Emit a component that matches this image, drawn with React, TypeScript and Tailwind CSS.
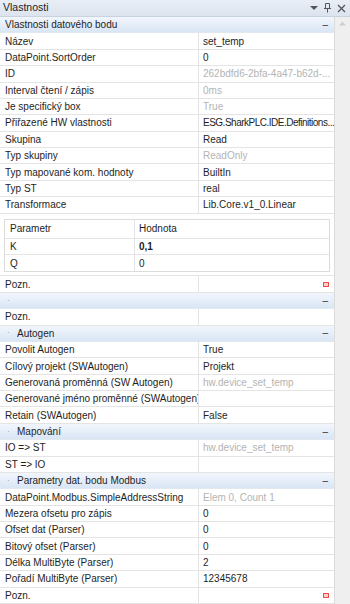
import React from 'react';

type Row =
  | { kind: 'header'; title: string; dot?: boolean }
  | { kind: 'prop'; label: string; value?: string; muted?: boolean; note?: boolean; tight?: boolean }
  | { kind: 'params' };

const rows: Row[] = [
  { kind: 'header', title: 'Vlastnosti datového bodu' },
  { kind: 'prop', label: 'Název', value: 'set_temp' },
  { kind: 'prop', label: 'DataPoint.SortOrder', value: '0' },
  { kind: 'prop', label: 'ID', value: '262bdfd6-2bfa-4a47-b62d-...', muted: true },
  { kind: 'prop', label: 'Interval čtení / zápis', value: '0ms', muted: true },
  { kind: 'prop', label: 'Je specifický box', value: 'True', muted: true },
  { kind: 'prop', label: 'Přiřazené HW vlastnosti', value: 'ESG.SharkPLC.IDE.Definitions...', tight: true },
  { kind: 'prop', label: 'Skupina', value: 'Read' },
  { kind: 'prop', label: 'Typ skupiny', value: 'ReadOnly', muted: true },
  { kind: 'prop', label: 'Typ mapované kom. hodnoty', value: 'BuiltIn' },
  { kind: 'prop', label: 'Typ ST', value: 'real' },
  { kind: 'prop', label: 'Transformace', value: 'Lib.Core.v1_0.Linear' },
  { kind: 'params' },
  { kind: 'prop', label: 'Pozn.', note: true },
  { kind: 'header', title: '', dot: true },
  { kind: 'prop', label: 'Pozn.' },
  { kind: 'header', title: 'Autogen', dot: true },
  { kind: 'prop', label: 'Povolit Autogen', value: 'True' },
  { kind: 'prop', label: 'Cílový projekt (SWAutogen)', value: 'Projekt' },
  { kind: 'prop', label: 'Generovaná proměnná (SW Autogen)', value: 'hw.device_set_temp', muted: true },
  { kind: 'prop', label: 'Generované jméno proměnné (SWAutogen)' },
  { kind: 'prop', label: 'Retain (SWAutogen)', value: 'False' },
  { kind: 'header', title: 'Mapování', dot: true },
  { kind: 'prop', label: 'IO => ST', value: 'hw.device_set_temp', muted: true },
  { kind: 'prop', label: 'ST => IO' },
  { kind: 'header', title: 'Parametry dat. bodu Modbus', dot: true },
  { kind: 'prop', label: 'DataPoint.Modbus.SimpleAddressString', value: 'Elem 0, Count 1', muted: true },
  { kind: 'prop', label: 'Mezera ofsetu pro zápis', value: '0' },
  { kind: 'prop', label: 'Ofset dat (Parser)', value: '0' },
  { kind: 'prop', label: 'Bitový ofset (Parser)', value: '0' },
  { kind: 'prop', label: 'Délka MultiByte (Parser)', value: '2' },
  { kind: 'prop', label: 'Pořadí MultiByte (Parser)', value: '12345678' },
  { kind: 'prop', label: 'Pozn.', note: true },
];

const NoteMark = () => (
  <span className="w-[6px] h-[5px] border border-[#f04a4a] bg-[#fbd0d0] mr-[5px]" />
);

const Header = ({ title, dot }: { title: string; dot?: boolean }) => (
  <div className="h-[16.4px] flex items-center bg-gradient-to-b from-[#f2f6fc] to-[#d9e6f5] border-b border-[#e2e8f0] pl-[5px] pr-[6px] text-[#1e1e1e]">
    {dot && <span className="text-[#888] text-[8px] w-[12px] pl-[2px] leading-none">·</span>}
    <span className="flex-1 truncate">{title}</span>
    <span className="text-[#333] text-[10px] leading-none">–</span>
  </div>
);

const Prop = ({ label, value, muted, note, tight }: { label: string; value?: string; muted?: boolean; note?: boolean; tight?: boolean }) => (
  <div className="h-[16.4px] flex bg-white border-b border-[#e4e4e4]">
    <div className="w-[199px] shrink-0 pl-[5px] flex items-center border-r border-[#e4e4e4] whitespace-nowrap overflow-hidden text-[#1e1e1e]">
      {label}
    </div>
    <div className={`flex-1 min-w-0 pl-[4px] flex items-center justify-between ${muted ? 'text-[#b4b4b4]' : 'text-[#1e1e1e]'}`}>
      <span className={`whitespace-nowrap ${tight ? 'tracking-[-0.5px]' : ''}`}>{value}</span>
      {note && <NoteMark />}
    </div>
  </div>
);

const Params = () => (
  <div className="h-[63px] bg-white border-b border-[#e4e4e4] pt-[5px] px-[4px]">
    <div className="border border-[#dcdcdc]">
      <div className="h-[19px] flex border-b border-[#e4e4e4]">
        <div className="w-[130px] pl-[5px] flex items-center border-r border-[#e4e4e4]">Parametr</div>
        <div className="pl-[4px] flex items-center">Hodnota</div>
      </div>
      <div className="h-[16.4px] flex border-b border-[#e4e4e4]">
        <div className="w-[130px] pl-[5px] flex items-center border-r border-[#e4e4e4]">K</div>
        <div className="pl-[4px] flex items-center font-bold">0,1</div>
      </div>
      <div className="h-[16.4px] flex">
        <div className="w-[130px] pl-[5px] flex items-center border-r border-[#e4e4e4]">Q</div>
        <div className="pl-[4px] flex items-center">0</div>
      </div>
    </div>
  </div>
);

export default function App() {
  return (
    <div
      className="w-[350px] h-[604px] bg-[#ececec] flex flex-col overflow-hidden text-[10px] text-[#1e1e1e]"
      style={{ fontFamily: '"Liberation Sans", Arial, sans-serif' }}
    >
      <div className="h-[17px] shrink-0 flex items-center bg-gradient-to-b from-[#e9eef6] to-[#dce4ef] border-b border-[#c9d3e0] pl-[3px] pr-[4px]">
        <span className="flex-1 text-[10.5px]">Vlastnosti</span>
        <svg width="8" height="6" viewBox="0 0 8 6" className="mr-[6px]">
          <path d="M0 1h8L4 5z" fill="#555" />
        </svg>
        <svg width="7" height="10" viewBox="0 0 7 10" className="mr-[6px]">
          <path d="M1.5 0.5h4v5h-4zM0 5.5h7M3.5 5.5v4" stroke="#555" fill="none" strokeWidth="1" />
        </svg>
        <svg width="9" height="9" viewBox="0 0 9 9">
          <path d="M1 1l7 7M8 1l-7 7" stroke="#555" strokeWidth="1.3" />
        </svg>
      </div>
      <div className="flex flex-1 min-h-0">
        <div className="w-[335px] shrink-0 flex flex-col border-r border-[#dcdcdc]">
          {rows.map((r, i) =>
            r.kind === 'header' ? (
              <Header key={i} title={r.title} dot={r.dot} />
            ) : r.kind === 'params' ? (
              <Params key={i} />
            ) : (
              <Prop key={i} label={r.label} value={r.value} muted={r.muted} note={r.note} tight={r.tight} />
            )
          )}
        </div>
        <div className="flex-1 bg-[#efefef] flex justify-center pt-[4px]">
          <svg width="7" height="5" viewBox="0 0 7 5">
            <path d="M0 4.5L3.5 0.5 7 4.5z" fill="#d0d0d0" />
          </svg>
        </div>
      </div>
    </div>
  );
}
